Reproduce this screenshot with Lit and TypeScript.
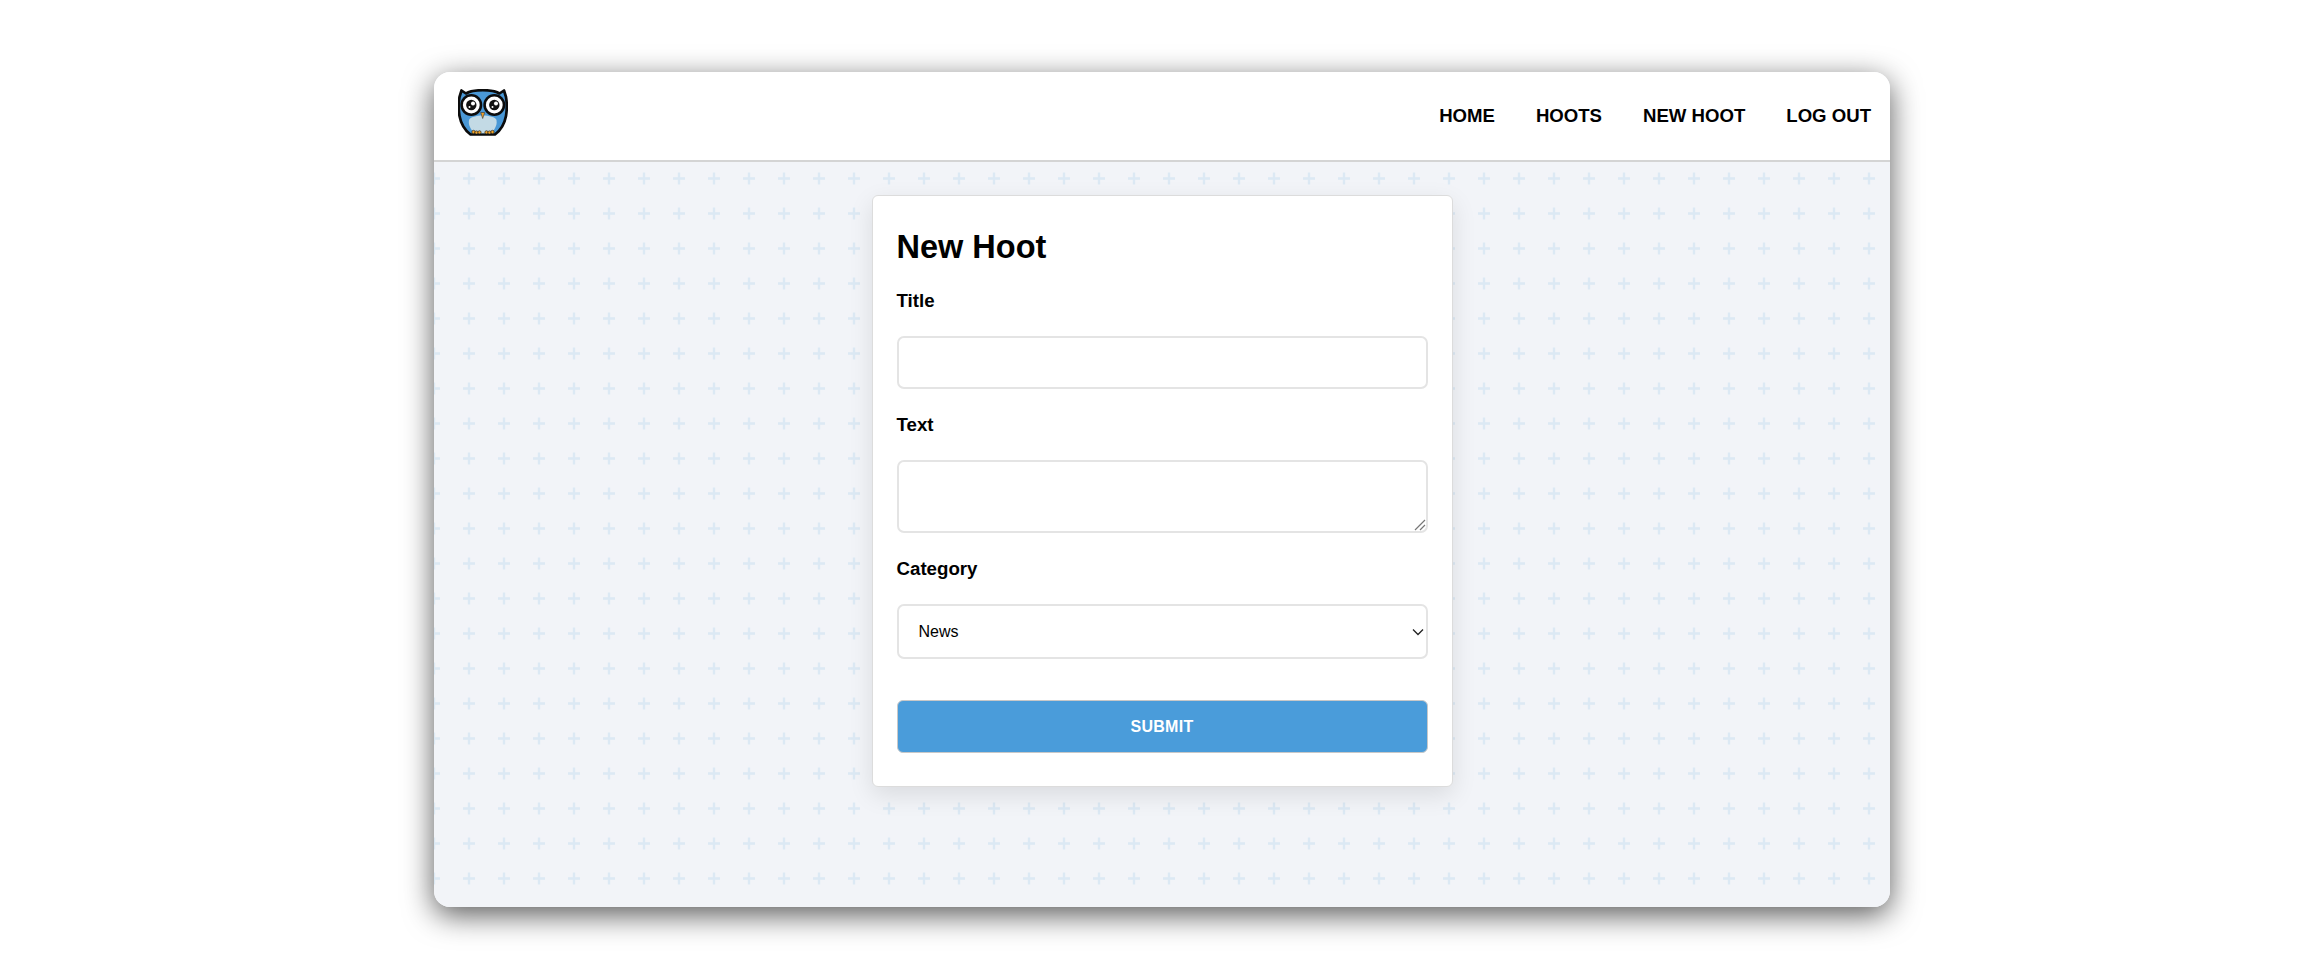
import { LitElement, html, css, unsafeCSS } from "lit";
import { customElement } from "lit/decorators.js";

const plus = `url("data:image/svg+xml,%3Csvg xmlns='http://www.w3.org/2000/svg' width='35' height='35'%3E%3Cpath d='M0 11.5h12M6 5.5v12' stroke='%23dce9f4' stroke-width='2.4' fill='none'/%3E%3C/svg%3E")`;
const chevron = `url("data:image/svg+xml,%3Csvg xmlns='http://www.w3.org/2000/svg' width='12' height='8'%3E%3Cpath d='M1 1.500l5 5 5-5' stroke='%23222' stroke-width='1.300' fill='none'/%3E%3C/svg%3E")`;
const grip = `url("data:image/svg+xml,%3Csvg xmlns='http://www.w3.org/2000/svg' width='12' height='12'%3E%3Cpath d='M1 11L11 1M6 11l5-5' stroke='%23777' stroke-width='1.200' fill='none'/%3E%3C/svg%3E")`;

@customElement("app-root")
export class AppRoot extends LitElement {
  static styles = css`
    :host {
      display: block;
      padding: 72px 434px 71px;
      background: #fff;
      font-family: "Liberation Sans", Arial, sans-serif;
      color: #000;
    }
    .window {
      height: 835px;
      border-radius: 16px;
      overflow: hidden;
      display: flex;
      flex-direction: column;
      background: #f2f4f8;
      box-shadow: 0 8px 30px rgba(0, 0, 0, 0.65);
    }
    nav {
      height: 90px;
      box-sizing: border-box;
      flex: none;
      background: #fff;
      border-bottom: 2px solid #d4d4d4;
      display: flex;
      align-items: flex-start;
      justify-content: space-between;
      padding: 0 19px 0 24px;
    }
    .owl { width: 50px; height: 47px; margin-top: 17px; display: block; }
    .links { display: flex; gap: 41px; margin-top: 33px; }
    .links a {
      font-size: 18.6px;
      line-height: 22px;
      font-weight: 700;
      color: #000;
      text-decoration: none;
    }
    main {
      flex: 1;
      background-color: #f2f4f8;
      background-image: ${unsafeCSS(plus)};
      background-position: -6px 5px;
      display: flex;
      justify-content: center;
      align-items: flex-start;
      padding-top: 33px;
    }
    .card {
      width: 581px;
      height: 592px;
      box-sizing: border-box;
      background: #fff;
      border: 1px solid #dcdcdc;
      border-radius: 6px;
      padding: 33px 24px 0;
      box-shadow: 0 8px 24px rgba(0, 0, 0, 0.1);
      display: flex;
      flex-direction: column;
    }
    h1 {
      margin: 0;
      font-size: 32.5px;
      line-height: 36px;
      font-weight: 700;
    }
    label {
      display: block;
      font-size: 18.7px;
      line-height: 22px;
      font-weight: 700;
      margin-top: 25px;
    }
    input, textarea, select {
      display: block;
      flex: none;
      width: 100%;
      box-sizing: border-box;
      border: 2px solid #e4e4e4;
      border-radius: 7px;
      background-color: #fff;
      font-family: inherit;
      font-size: 16px;
      color: #000;
      margin: 24px 0 0;
      outline: none;
    }
    input { height: 53px; }
    textarea {
      height: 73px;
      resize: none;
      background-image: ${unsafeCSS(grip)};
      background-repeat: no-repeat;
      background-position: right 0px bottom 0px;
    }
    select {
      height: 55px;
      padding: 0 20px;
      appearance: none;
      -webkit-appearance: none;
      background-image: ${unsafeCSS(chevron)};
      background-repeat: no-repeat;
      background-position: right 2px center;
    }
    button {
      display: block;
      flex: none;
      width: 100%;
      height: 53px;
      margin-top: 41px;
      background: #4a9cda;
      border: 1px solid #c8c8c8;
      border-radius: 6px;
      color: #fff;
      font-family: inherit;
      font-size: 16px;
      font-weight: 700;
      letter-spacing: 0.3px;
    }
  `;

  render() {
    return html`
      <div class="window">
        <nav>
          <svg class="owl" viewBox="0 0 50 47">
            <path d="M3.500 1.500 8 4.500C12.500 1.800 18 1.200 24.700 1.200S37 1.800 41.500 4.500L46 1.500 48 8C49 14 49 21 48 27 46.500 35 43 41 37 45.500H12.500C6.500 41 3 35 1.500 27 .5 21 .5 14 1.500 8Z" fill="#4a98d6" stroke="#0c0c0c" stroke-width="2.700" stroke-linejoin="round"/>
            <path d="M11 31C13 25 36.500 25 38.500 31 39.500 37 36 41.500 32.500 44.200H17C13.500 41.500 10 37 11 31Z" fill="#c3dae5"/>
            <circle cx="13.300" cy="16" r="11" fill="#0c0c0c"/>
            <circle cx="36.300" cy="16" r="11" fill="#0c0c0c"/>
            <circle cx="13.300" cy="16" r="8.400" fill="#fff"/>
            <circle cx="36.300" cy="16" r="8.400" fill="#fff"/>
            <circle cx="13.300" cy="16" r="5.200" fill="#111"/>
            <circle cx="36.300" cy="16" r="5.200" fill="#111"/>
            <circle cx="15" cy="14.500" r="2" fill="#fff"/>
            <circle cx="38" cy="14.500" r="2" fill="#fff"/>
            <circle cx="11.500" cy="18" r="1" fill="#fff"/>
            <circle cx="34.500" cy="18" r="1" fill="#fff"/>
            <path d="M22.700 23.500H26.700L24.700 29.500Z" fill="#f0a22a" stroke="#333" stroke-width=".6"/>
            <g fill="#f2a52a" stroke="#111" stroke-width=".6">
              <circle cx="15.500" cy="43" r="1.700"/>
              <circle cx="18.500" cy="43.500" r="1.600"/>
              <circle cx="21.500" cy="43.300" r="1.600"/>
              <circle cx="28.500" cy="43.300" r="1.600"/>
              <circle cx="31.500" cy="43.500" r="1.600"/>
              <circle cx="34.500" cy="43" r="1.700"/>
            </g>
          </svg>
          <div class="links">
            <a href="#">HOME</a>
            <a href="#">HOOTS</a>
            <a href="#">NEW HOOT</a>
            <a href="#">LOG OUT</a>
          </div>
        </nav>
        <main>
          <form class="card">
            <h1>New Hoot</h1>
            <label>Title</label>
            <input type="text" />
            <label>Text</label>
            <textarea></textarea>
            <label>Category</label>
            <select><option>News</option></select>
            <button type="button">SUBMIT</button>
          </form>
        </main>
      </div>
    `;
  }
}
